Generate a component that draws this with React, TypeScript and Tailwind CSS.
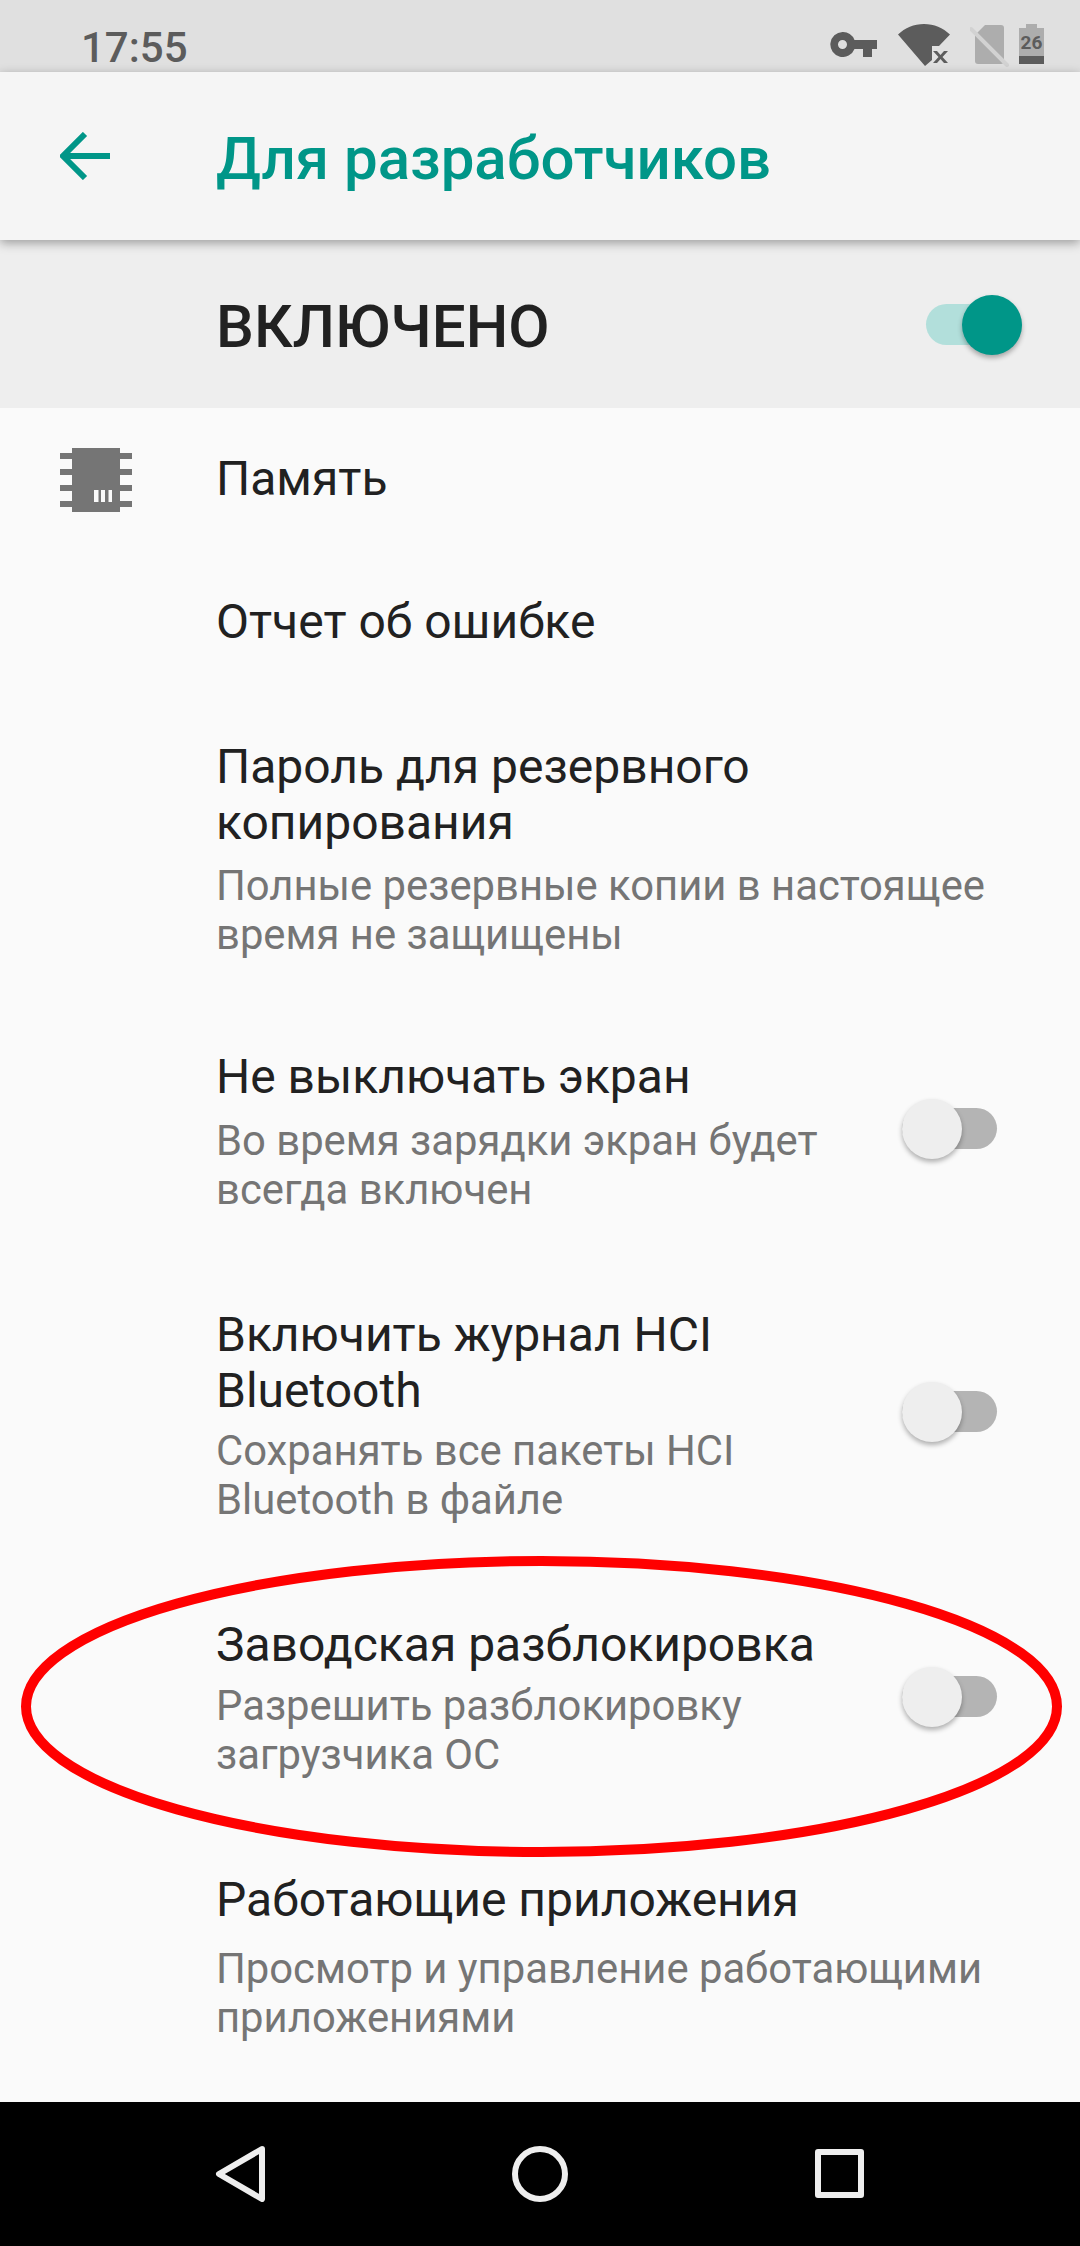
const rows = [
  { title: ["Пароль для резервного", "копирования"], summary: ["Полные резервные копии в настоящее", "время не защищены"], pad: "pt-[45px] pb-[45px]", gap: "mt-[10px]", shift: "" },
  { title: ["Не выключать экран"], summary: ["Во время зарядки экран будет", "всегда включен"], pad: "py-[45px]", gap: "mt-[11px]", toggle: true, shift: "-mt-[6px]" },
  { title: ["Включить журнал HCI", "Bluetooth"], summary: ["Сохранять все пакеты HCI", "Bluetooth в файле"], pad: "pt-[48px] pb-[45px]", gap: "mt-[7px]", toggle: true, shift: "-mt-[9px]" },
  { title: ["Заводская разблокировка"], summary: ["Разрешить разблокировку", "загрузчика ОС"], pad: "pt-[48px] pb-[46px]", gap: "mt-[8px]", toggle: true, shift: "-mt-[3px]" },
  { title: ["Работающие приложения"], summary: ["Просмотр и управление работающими", "приложениями"], pad: "pt-[47px]", gap: "mt-[16px]", shift: "" },
];

function Toggle({ className }: { className: string }) {
  return (
    <div className={`relative h-[41px] w-[95px] rounded-full bg-[#b4b4b4] ${className}`}>
      <div className="absolute left-0 top-[-9px] h-[60px] w-[60px] rounded-full bg-[#eeeeee] shadow-[0_3px_5px_rgba(0,0,0,0.3)]" />
    </div>
  );
}

function ChipIcon() {
  return (
    <svg width="72" height="64" viewBox="0 0 72 64" fill="#757575">
      <rect x="12" width="48" height="64" />
      <rect y="5" width="72" height="6" />
      <rect y="21" width="72" height="6" />
      <rect y="37" width="72" height="6" />
      <rect y="53" width="72" height="6" />
      <rect x="34" y="42" width="4.5" height="12" fill="#fafafa" />
      <rect x="41" y="42" width="4" height="12" fill="#fafafa" />
      <rect x="48.5" y="42" width="3.5" height="12" fill="#fafafa" />
    </svg>
  );
}

function StatusIcons() {
  return (
    <div className="flex items-start">
      <svg className="mt-[32px]" width="47" height="25" viewBox="0 0 47 25" fill="#5c5c5c">
        <path fillRule="evenodd" d="M12.5 0A12.5 12.5 0 0 1 24.5 8H47v9h-5v8h-9v-8h-8.5A12.5 12.5 0 1 1 12.5 0Zm0 8a4.5 4.5 0 1 0 0 9 4.5 4.5 0 0 0 0-9Z" />
      </svg>
      <svg className="ml-[21px] mt-[24px]" width="52" height="42" viewBox="0 0 52 42" fill="#5c5c5c">
        <path d="M0 10.5C7 4 16 0 26 0s19 4 26 10.500L41 22H34v14l-7 6Z" />
        <path d="M35 27h4l3.500 4 3.500-4h4l-5.500 6 5.500 6h-4l-3.500-4-3.500 4h-4l5.500-6Z" />
      </svg>
      <svg className="ml-[20px] mt-[25px]" width="40" height="42" viewBox="0 0 40 42">
        <path d="M15 0h16a3 3 0 0 1 3 3v33a3 3 0 0 1-3 3H8a3 3 0 0 1-3-3V10Z" fill="#adadad" />
        <path d="M1 4l36 36" stroke="#d2d2d2" strokeWidth="4" strokeLinecap="round" />
      </svg>
      <div className="ml-[9px] mr-[36px] mt-[24px] flex h-[40px] w-[25px] flex-col items-center">
        <div className="h-[4px] w-[11px] bg-[#adadad]" />
        <div className="flex h-[28px] w-full items-center justify-center bg-[#adadad] text-[19px] font-bold leading-none text-[#5c5c5c]">26</div>
        <div className="h-[8px] w-full bg-[#5c5c5c]" />
      </div>
    </div>
  );
}

export default function App() {
  return (
    <div className="relative flex h-[2246px] w-[1080px] flex-col overflow-hidden bg-[#fafafa] font-['Roboto',sans-serif]">
      <div className="flex h-[72px] items-start justify-between bg-[#e0e0e0]">
        <span className="ml-[81px] mt-[24px] text-[42px] font-medium leading-[48px] text-[#5c5c5c]">17:55</span>
        <StatusIcons />
      </div>

      <div className="z-10 flex h-[168px] items-center bg-[#f5f5f5] shadow-[0_3px_10px_rgba(0,0,0,0.35)]">
        <svg className="ml-[60px]" width="50" height="48" viewBox="0 0 50 48" fill="none" stroke="#009688" strokeWidth="6">
          <path d="M50 24H5M25 2 3 24l22 22" />
        </svg>
        <h1 className="ml-[106px] pt-[5px] text-[60px] font-medium leading-none text-[#009688]">Для разработчиков</h1>
      </div>

      <div className="flex h-[168px] items-center justify-between bg-[#eeeeee] pl-[216px] pr-[58px]">
        <span className="pt-[5px] text-[60px] font-medium leading-none text-[#212121]">ВКЛЮЧЕНО</span>
        <div className="relative h-[41px] w-[96px] rounded-full bg-[#b2dfdb]">
          <div className="absolute right-0 top-[-9px] h-[60px] w-[60px] rounded-full bg-[#009688] shadow-[0_3px_5px_rgba(0,0,0,0.3)]" />
        </div>
      </div>

      <div className="flex-1">
        <div className="flex items-start pl-[60px] pt-[40px]">
          <ChipIcon />
          <span className="ml-[84px] mt-[3px] text-[48px] leading-[56px] text-[#212121]">Память</span>
        </div>
        <div className="pl-[216px] pt-[82px] pb-[44px] text-[48px] leading-[56px] text-[#212121]">Отчет об ошибке</div>

        {rows.map((row) => (
          <div key={row.title[0]} className={`flex items-center justify-between pl-[216px] pr-[83px] ${row.pad}`}>
            <div>
              <div className="text-[48px] leading-[56px] text-[#212121]">
                {row.title.map((line) => <div key={line}>{line}</div>)}
              </div>
              <div className={`text-[41.8px] leading-[49px] text-[#757575] ${row.gap}`}>
                {row.summary.map((line) => <div key={line}>{line}</div>)}
              </div>
            </div>
            {row.toggle && <Toggle className={row.shift} />}
          </div>
        ))}
      </div>

      <div className="flex h-[144px] items-start bg-black">
        <svg className="ml-[215px] mt-[44px]" width="52" height="56" viewBox="0 0 52 56" fill="none" stroke="#eeeeee" strokeWidth="6" strokeLinejoin="round">
          <path d="M47 3 4 28l43 25Z" />
        </svg>
        <svg className="ml-[245px] mt-[44px]" width="56" height="56" viewBox="0 0 56 56" fill="none" stroke="#eeeeee" strokeWidth="6">
          <circle cx="28" cy="28" r="25" />
        </svg>
        <svg className="ml-[247px] mt-[47px]" width="49" height="49" viewBox="0 0 49 49" fill="none" stroke="#eeeeee" strokeWidth="6" strokeLinejoin="round">
          <rect x="3" y="3" width="43" height="43" />
        </svg>
      </div>

      <svg className="pointer-events-none absolute left-[21px] top-[1556px] z-20" width="1041" height="301" viewBox="0 0 1041 301" fill="none">
        <ellipse cx="520.500" cy="150.500" rx="515.500" ry="145.500" stroke="#ff0000" strokeWidth="10" />
      </svg>
    </div>
  );
}
